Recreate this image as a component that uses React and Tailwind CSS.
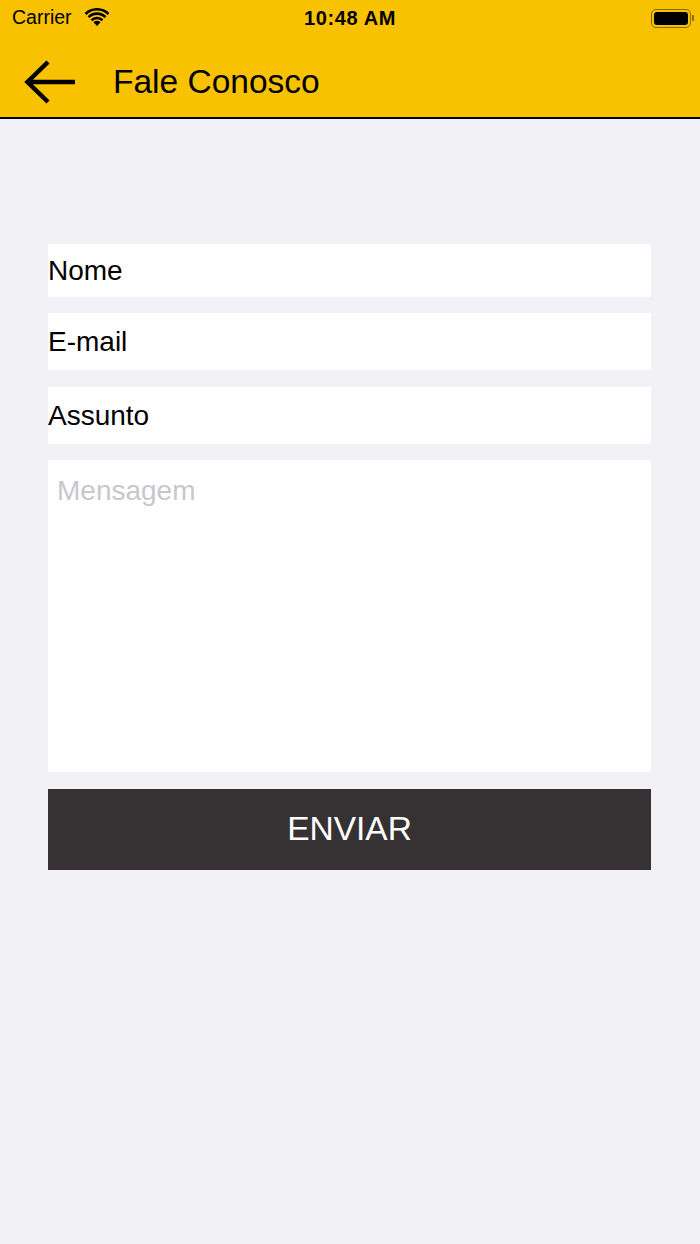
import React from "react";

export default function App() {
  const font = { fontFamily: '"Liberation Sans", Arial, sans-serif' };
  return (
    <div className="w-[700px] h-[1244px] bg-[#f1f1f6] flex flex-col" style={font}>
      <div className="bg-[#f9c200] h-[119px] flex flex-col border-b-2 border-black">
        <div className="h-[36px] flex items-center justify-between px-[12px] relative">
          <div className="flex items-center gap-[12px]">
            <span className="text-[19.5px] text-black">Carrier</span>
            <svg width="26" height="20" viewBox="0 0 26 20">
              <path d="M13 18 L9.5 14.3 A5 5 0 0 1 16.5 14.3 Z" fill="black" />
              <path d="M6.6 11.3 A9.2 9.2 0 0 1 19.4 11.3 L17.6 13.2 A6.6 6.6 0 0 0 8.4 13.2 Z" fill="black" />
              <path d="M3.6 8.2 A13.4 13.4 0 0 1 22.4 8.2 L20.6 10.1 A10.8 10.8 0 0 0 5.4 10.1 Z" fill="black" />
              <path d="M0.6 5.1 A17.6 17.6 0 0 1 25.4 5.1 L23.6 7 A15 15 0 0 0 2.4 7 Z" fill="black" />
            </svg>
          </div>
          <span className="absolute left-1/2 -translate-x-1/2 text-[20px] font-bold text-black tracking-[0.6px]">10:48 AM</span>
          <div className="flex items-center mr-[-6px]">
            <div className="w-[40px] h-[19px] rounded-[5px] border-[1.5px] border-[#8a6a00] p-[2px]">
              <div className="w-full h-full bg-black rounded-[3px]" />
            </div>
            <div className="w-[2px] h-[6px] bg-[#8a6a00] rounded-r-[1px] ml-[1px]" />
          </div>
        </div>
        <div className="flex-1 flex items-center pt-[11px]">
          <div className="w-[113px] flex items-center pl-[24px]">
            <svg width="54" height="44" viewBox="0 0 54 44">
              <path d="M3 22 H51" stroke="black" strokeWidth="4.5" fill="none" />
              <path d="M24 2 L3.5 22 L24 42" stroke="black" strokeWidth="4.5" fill="none" strokeLinejoin="miter" />
            </svg>
          </div>
          <span className="text-[33.5px] text-black">Fale Conosco</span>
        </div>
      </div>
      <div className="px-[48px] pt-[125px] flex flex-col pr-[49px]">
        <div className="h-[53px] bg-white flex items-center text-[28px] text-black">Nome</div>
        <div className="h-[57px] mt-[16px] bg-white flex items-center text-[28px] text-black">E-mail</div>
        <div className="h-[57px] mt-[17px] bg-white flex items-center text-[28px] text-black">Assunto</div>
        <div className="h-[312px] mt-[16px] bg-white px-[9px] pt-[15px] text-[28px] text-[#c7c7cd] leading-[32px]">Mensagem</div>
        <div className="h-[81px] mt-[17px] bg-[#363233] flex items-center justify-center text-[33.5px] text-white">ENVIAR</div>
      </div>
    </div>
  );
}
